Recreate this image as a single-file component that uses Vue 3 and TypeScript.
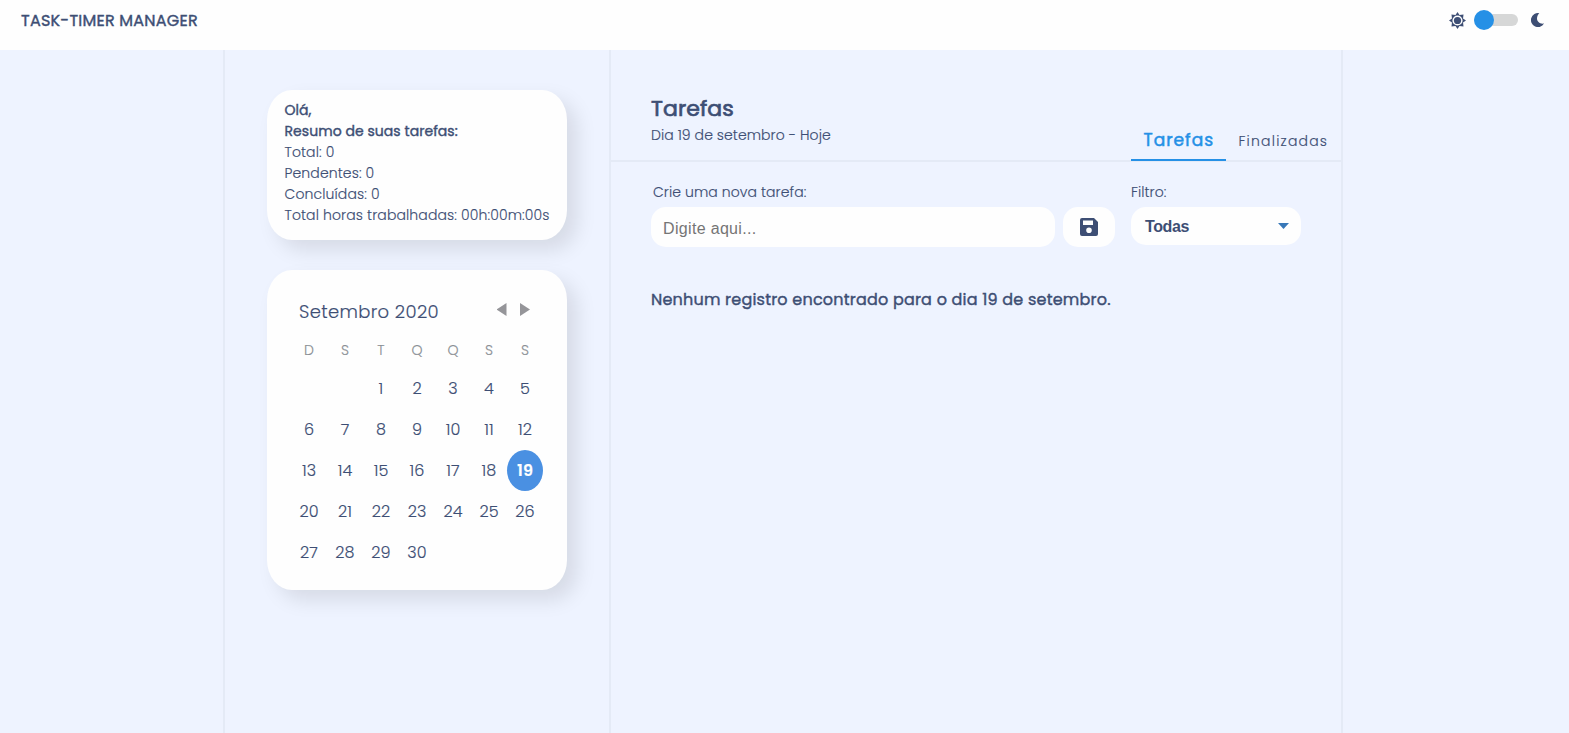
<script setup lang="ts">
import { ref } from 'vue'

const weekdays: string[] = ['D', 'S', 'T', 'Q', 'Q', 'S', 'S']
const leadingBlanks = 2
const days: number[] = Array.from({ length: 30 }, (_, i) => i + 1)
const selected = ref<number>(19)
const task = ref<string>('')
</script>

<template>
  <div class="page">
    <header class="topbar">
      <h1 class="brand">TASK-TIMER MANAGER</h1>
      <div class="theme">
        <svg class="sun" viewBox="0 0 24 24" width="17" height="17">
          <path fill="currentColor" fill-rule="evenodd" d="M12 0l2.800 4.200 5.700-.7-.7 5.700L24 12l-4.200 2.800.7 5.700-5.700-.7L12 24l-2.800-4.200-5.700.7.7-5.700L0 12l4.200-2.800-.7-5.700 5.700.7zM12 4.800a7.200 7.200 0 1 0 0 14.400a7.200 7.200 0 1 0 0-14.400z" />
          <circle cx="12" cy="12" r="5.100" fill="currentColor" />
        </svg>
        <div class="switch"><span class="knob"></span></div>
        <svg class="moon" viewBox="0 0 13 14" width="13" height="14">
          <path fill="currentColor" d="M8.300.2A7 7 0 1 0 13 10.600C9 11.300 6 8.800 6 5.600C6 3.200 7 1.500 8.300.2z" />
        </svg>
      </div>
    </header>

    <div class="body">
      <aside class="side">
        <section class="card summary">
          <strong>Olá,</strong>
          <strong>Resumo de suas tarefas:</strong>
          <p>Total: 0</p>
          <p>Pendentes: 0</p>
          <p>Concluídas: 0</p>
          <p>Total horas trabalhadas: 00h:00m:00s</p>
        </section>

        <section class="card calendar">
          <div class="cal-head">
            <span>Setembro 2020</span>
            <div class="arrows"><i class="prev"></i><i class="next"></i></div>
          </div>
          <div class="weekdays">
            <span v-for="(d, i) in weekdays" :key="i">{{ d }}</span>
          </div>
          <div class="days">
            <span v-for="b in leadingBlanks" :key="'b' + b"></span>
            <span v-for="d in days" :key="d" class="day" :class="{ active: d === selected }" @click="selected = d">{{ d }}</span>
          </div>
        </section>
      </aside>

      <main class="main">
        <div class="main-head">
          <div class="titles">
            <h2>Tarefas</h2>
            <p>Dia 19 de setembro - Hoje</p>
          </div>
          <nav class="tabs">
            <a class="tab current">Tarefas</a>
            <a class="tab">Finalizadas</a>
          </nav>
        </div>
        <div class="form">
          <div class="new-task">
            <label>Crie uma nova tarefa:</label>
            <div class="entry">
              <input v-model="task" type="text" placeholder="Digite aqui..." />
              <button class="save">
                <svg viewBox="0 0 18 18" width="18" height="18">
                  <path fill="currentColor" fill-rule="evenodd" d="M2 0H14L18 4V16a2 2 0 0 1-2 2H2a2 2 0 0 1-2-2V2a2 2 0 0 1 2-2zM3 2.500V7H13V2.500zM9 9.500a2.800 2.800 0 1 0 0 5.600a2.800 2.800 0 1 0 0-5.600z" />
                </svg>
              </button>
            </div>
          </div>
          <div class="filter">
            <label>Filtro:</label>
            <div class="select"><span>Todas</span><i></i></div>
          </div>
        </div>
        <p class="empty">Nenhum registro encontrado para o dia 19 de setembro.</p>
      </main>
    </div>
  </div>
</template>

<style>
body {
  margin: 0;
  overflow: hidden;
}
</style>

<style scoped>
* {
  box-sizing: border-box;
}
h1, h2, p {
  margin: 0;
  font-weight: inherit;
}
.page {
  width: 100%;
  height: 100vh;
  display: flex;
  flex-direction: column;
  background: #eef3ff;
  color: #3d4e74;
  font-family: Poppins, Inter, "Open Sans", sans-serif;
  font-size: 14px;
  font-weight: 300;
  letter-spacing: 0.080px;
  -webkit-text-stroke: 0.150px currentColor;
  white-space: nowrap;
}
.topbar {
  height: 50px;
  flex: none;
  background: #fefefe;
  display: flex;
  justify-content: space-between;
  padding: 0 25px 0 21px;
}
.brand {
  font-size: 16px;
  font-weight: 400;
  line-height: 41px;
  letter-spacing: 0.230px;
  -webkit-text-stroke: 0.4px currentColor;
}
.theme {
  height: 40px;
  display: flex;
  align-items: center;
}
.switch {
  width: 44px;
  height: 20px;
  margin: 0 13px 0 8px;
  display: flex;
  align-items: center;
  position: relative;
}
.switch::before {
  content: "";
  width: 44px;
  height: 12px;
  border-radius: 6px;
  background: #d6d7d7;
}
.knob {
  position: absolute;
  left: 0;
  width: 20px;
  height: 20px;
  border-radius: 50%;
  background: #2590e6;
}
.body {
  flex: 1;
  margin-left: 223px;
  width: 1120px;
  display: flex;
  border-left: 2px solid #e4eaf6;
  border-right: 2px solid #e4eaf6;
}
.side {
  width: 384px;
  padding: 40px 42px 0;
  display: flex;
  flex-direction: column;
  gap: 30px;
}
.card {
  width: 300px;
  background: #fefefe;
  border-radius: 25px / 30px;
  box-shadow: 10px 10px 20px rgba(0, 0, 0, 0.1);
}
.summary {
  height: 150px;
  padding: 10px 17.500px;
  line-height: 21px;
  letter-spacing: 0.120px;
}
.summary strong {
  display: block;
  font-weight: 400;
  letter-spacing: 0.050px;
  -webkit-text-stroke: 0.4px currentColor;
}
.calendar {
  height: 320px;
  padding: 28px 24px 0;
}
.cal-head {
  height: 27px;
  padding: 0 13px 0 8px;
  display: flex;
  justify-content: space-between;
  font-size: 18px;
  line-height: 27px;
  letter-spacing: 0.350px;
}
.arrows {
  display: flex;
  gap: 13.500px;
  padding-top: 5px;
}
.arrows i {
  width: 10px;
  height: 13px;
  background: #959599;
}
.prev {
  clip-path: polygon(100% 0, 100% 100%, 0 50%);
}
.next {
  clip-path: polygon(0 0, 100% 50%, 0 100%);
}
.weekdays, .days {
  display: grid;
  grid-template-columns: repeat(7, 36px);
  text-align: center;
}
.weekdays {
  margin-top: 15px;
  height: 28px;
  line-height: 21px;
  font-size: 14px;
  color: #8a8f95;
}
.days {
  grid-auto-rows: 41px;
  line-height: 41px;
  font-size: 16px;
}
.active {
  border-radius: 50%;
  background: #4a90e2;
  color: #fefefe;
  font-weight: 600;
}
.main {
  flex: 1;
  border-left: 2px solid #e4eaf6;
}
.main-head {
  height: 112px;
  padding-left: 40px;
  display: flex;
  justify-content: space-between;
  border-bottom: 2px solid #e4eaf6;
}
.titles {
  padding-top: 41px;
}
.titles h2 {
  font-size: 22px;
  font-weight: 400;
  line-height: 35px;
  height: 34px;
  -webkit-text-stroke: 0.7px currentColor;
}
.titles p {
  line-height: 21px;
}
.tabs {
  display: flex;
  align-items: flex-end;
  height: 111px;
}
.tab {
  height: 39px;
  line-height: 39px;
  padding-left: 12.500px;
  width: 115px;
  letter-spacing: 1.200px;
}
.current {
  width: 95px;
  line-height: 37px;
  font-size: 17px;
  font-weight: 400;
  letter-spacing: 1px;
  color: #2590e6;
  border-bottom: 2px solid #2590e6;
  -webkit-text-stroke: 0.5px currentColor;
}
.form {
  padding: 19px 0 0 40px;
  display: flex;
  gap: 16px;
}
.form label {
  display: block;
  line-height: 22px;
  height: 21px;
}
.new-task label {
  padding-left: 2px;
}
.entry {
  display: flex;
  gap: 8px;
  margin-top: 5px;
}
.entry input {
  width: 404px;
  height: 40px;
  padding: 3px 12px 0;
  border: 0;
  outline: 0;
  border-radius: 15px;
  background: #fefefe;
  font: 16px "Liberation Sans", Arial, sans-serif;
  letter-spacing: 0.330px;
  -webkit-text-stroke: 0;
}
.entry input::placeholder {
  color: #757575;
}
.save {
  width: 52px;
  height: 40px;
  padding: 0;
  border: 0;
  border-radius: 15px;
  background: #fefefe;
  color: #3d4e74;
  display: grid;
  place-items: center;
}
.select {
  width: 170px;
  height: 38px;
  margin-top: 5px;
  padding: 0 12px 0 14px;
  display: flex;
  align-items: center;
  justify-content: space-between;
  border-radius: 15px;
  background: #fefefe;
  font: bold 16px "Liberation Sans", Arial, sans-serif;
  letter-spacing: -0.400px;
  -webkit-text-stroke: 0;
}
.select span {
  padding-top: 1px;
}
.select i {
  width: 11px;
  height: 6px;
  background: #3878b8;
  clip-path: polygon(0 0, 100% 0, 50% 100%);
}
.empty {
  padding: 40px 0 0 40px;
  font-size: 16px;
  font-weight: 400;
  line-height: 26px;
  letter-spacing: 0.210px;
  -webkit-text-stroke: 0.4px currentColor;
}
</style>
